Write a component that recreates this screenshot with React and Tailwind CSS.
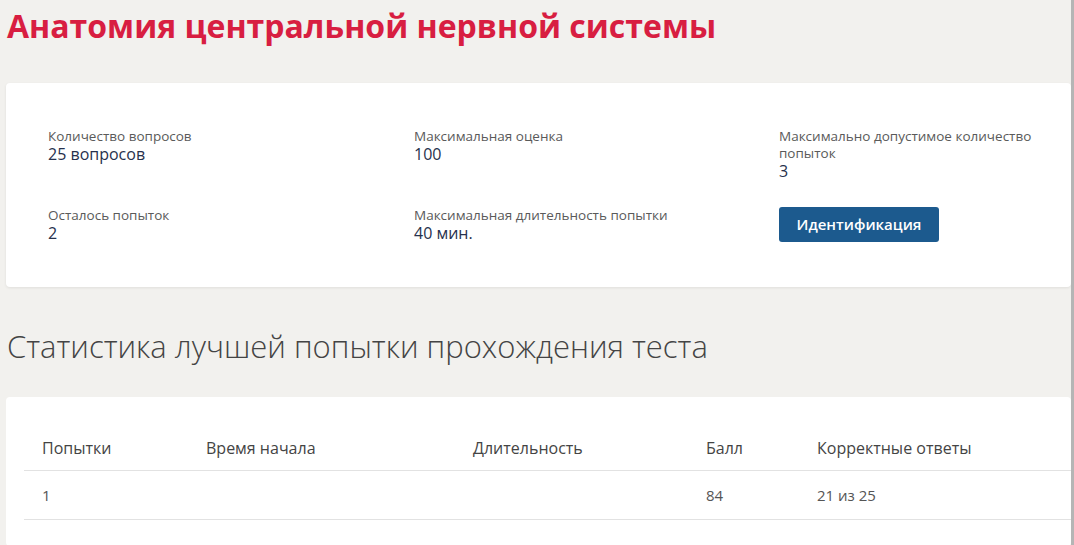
import React from 'react';

const info = [
  { label: 'Количество вопросов', value: '25 вопросов' },
  { label: 'Максимальная оценка', value: '100' },
  { label: 'Максимально допустимое количество попыток', value: '3' },
  { label: 'Осталось попыток', value: '2' },
  { label: 'Максимальная длительность попытки', value: '40 мин.' },
];

const columns = [
  { title: 'Попытки', w: 'w-[164px]' },
  { title: 'Время начала', w: 'w-[267px]' },
  { title: 'Длительность', w: 'w-[233px]' },
  { title: 'Балл', w: 'w-[111px]' },
  { title: 'Корректные ответы', w: '' },
];

const row = ['1', '', '', '84', '21 из 25'];

const InfoItem = ({ label, value }) => (
  <div>
    <div className="text-[13.5px] leading-[17px] text-[#5a5a5a]">{label}</div>
    <div className="text-[16px] leading-[18px] text-[#27314d]">{value}</div>
  </div>
);

export default function App() {
  return (
    <div className="flex min-h-[545px] bg-[#f2f1ee] font-['Open_Sans','Noto_Sans',sans-serif]">
      <div className="flex-1 pl-[6px] pt-[6px]">
        {/* Заголовок теста */}
        <h1 className="pl-[1px] text-[32px] leading-[40px] font-bold text-[#d81e41]">
          Анатомия центральной нервной системы
        </h1>

        {/* Параметры теста */}
        <div className="mt-[37px] bg-white rounded-sm shadow-[0_1px_3px_rgba(0,0,0,0.08)] pl-[42px] pt-[45px] pb-[45px]">
          <div className="grid grid-cols-[366px_365px_1fr] gap-y-[27px]">
            <InfoItem {...info[0]} />
            <InfoItem {...info[1]} />
            <div className="w-[270px]">
              <InfoItem {...info[2]} />
            </div>
            <InfoItem {...info[3]} />
            <InfoItem {...info[4]} />
            <div>
              <button className="h-[35px] w-[160px] rounded-[3px] bg-[#1c5a8e] text-white text-[15px] font-semibold">
                Идентификация
              </button>
            </div>
          </div>
        </div>

        <h2 className="mt-[39px] pl-[1px] text-[31px] leading-[40px] font-light text-[#444]">
          Статистика лучшей попытки прохождения теста
        </h2>

        {/* Таблица результатов */}
        <div className="mt-[31px] bg-white rounded-sm pt-[29px] pl-[18px] pb-[26px]">
          <div className="flex border-b border-[#e2e2e2]">
            {columns.map(c => (
              <div key={c.title} className={`${c.w} pl-[18px] py-3 text-[16px] leading-[20px] text-[#444]`}>
                {c.title}
              </div>
            ))}
          </div>
          <div className="flex border-b border-[#e2e2e2]">
            {columns.map((c, i) => (
              <div key={c.title} className={`${c.w} pl-[18px] py-[14px] text-[15px] leading-[20px] text-[#555]`}>
                {row[i]}
              </div>
            ))}
          </div>
        </div>
      </div>
      <div className="w-[3px] bg-[#b5b5b5]" />
    </div>
  );
}
